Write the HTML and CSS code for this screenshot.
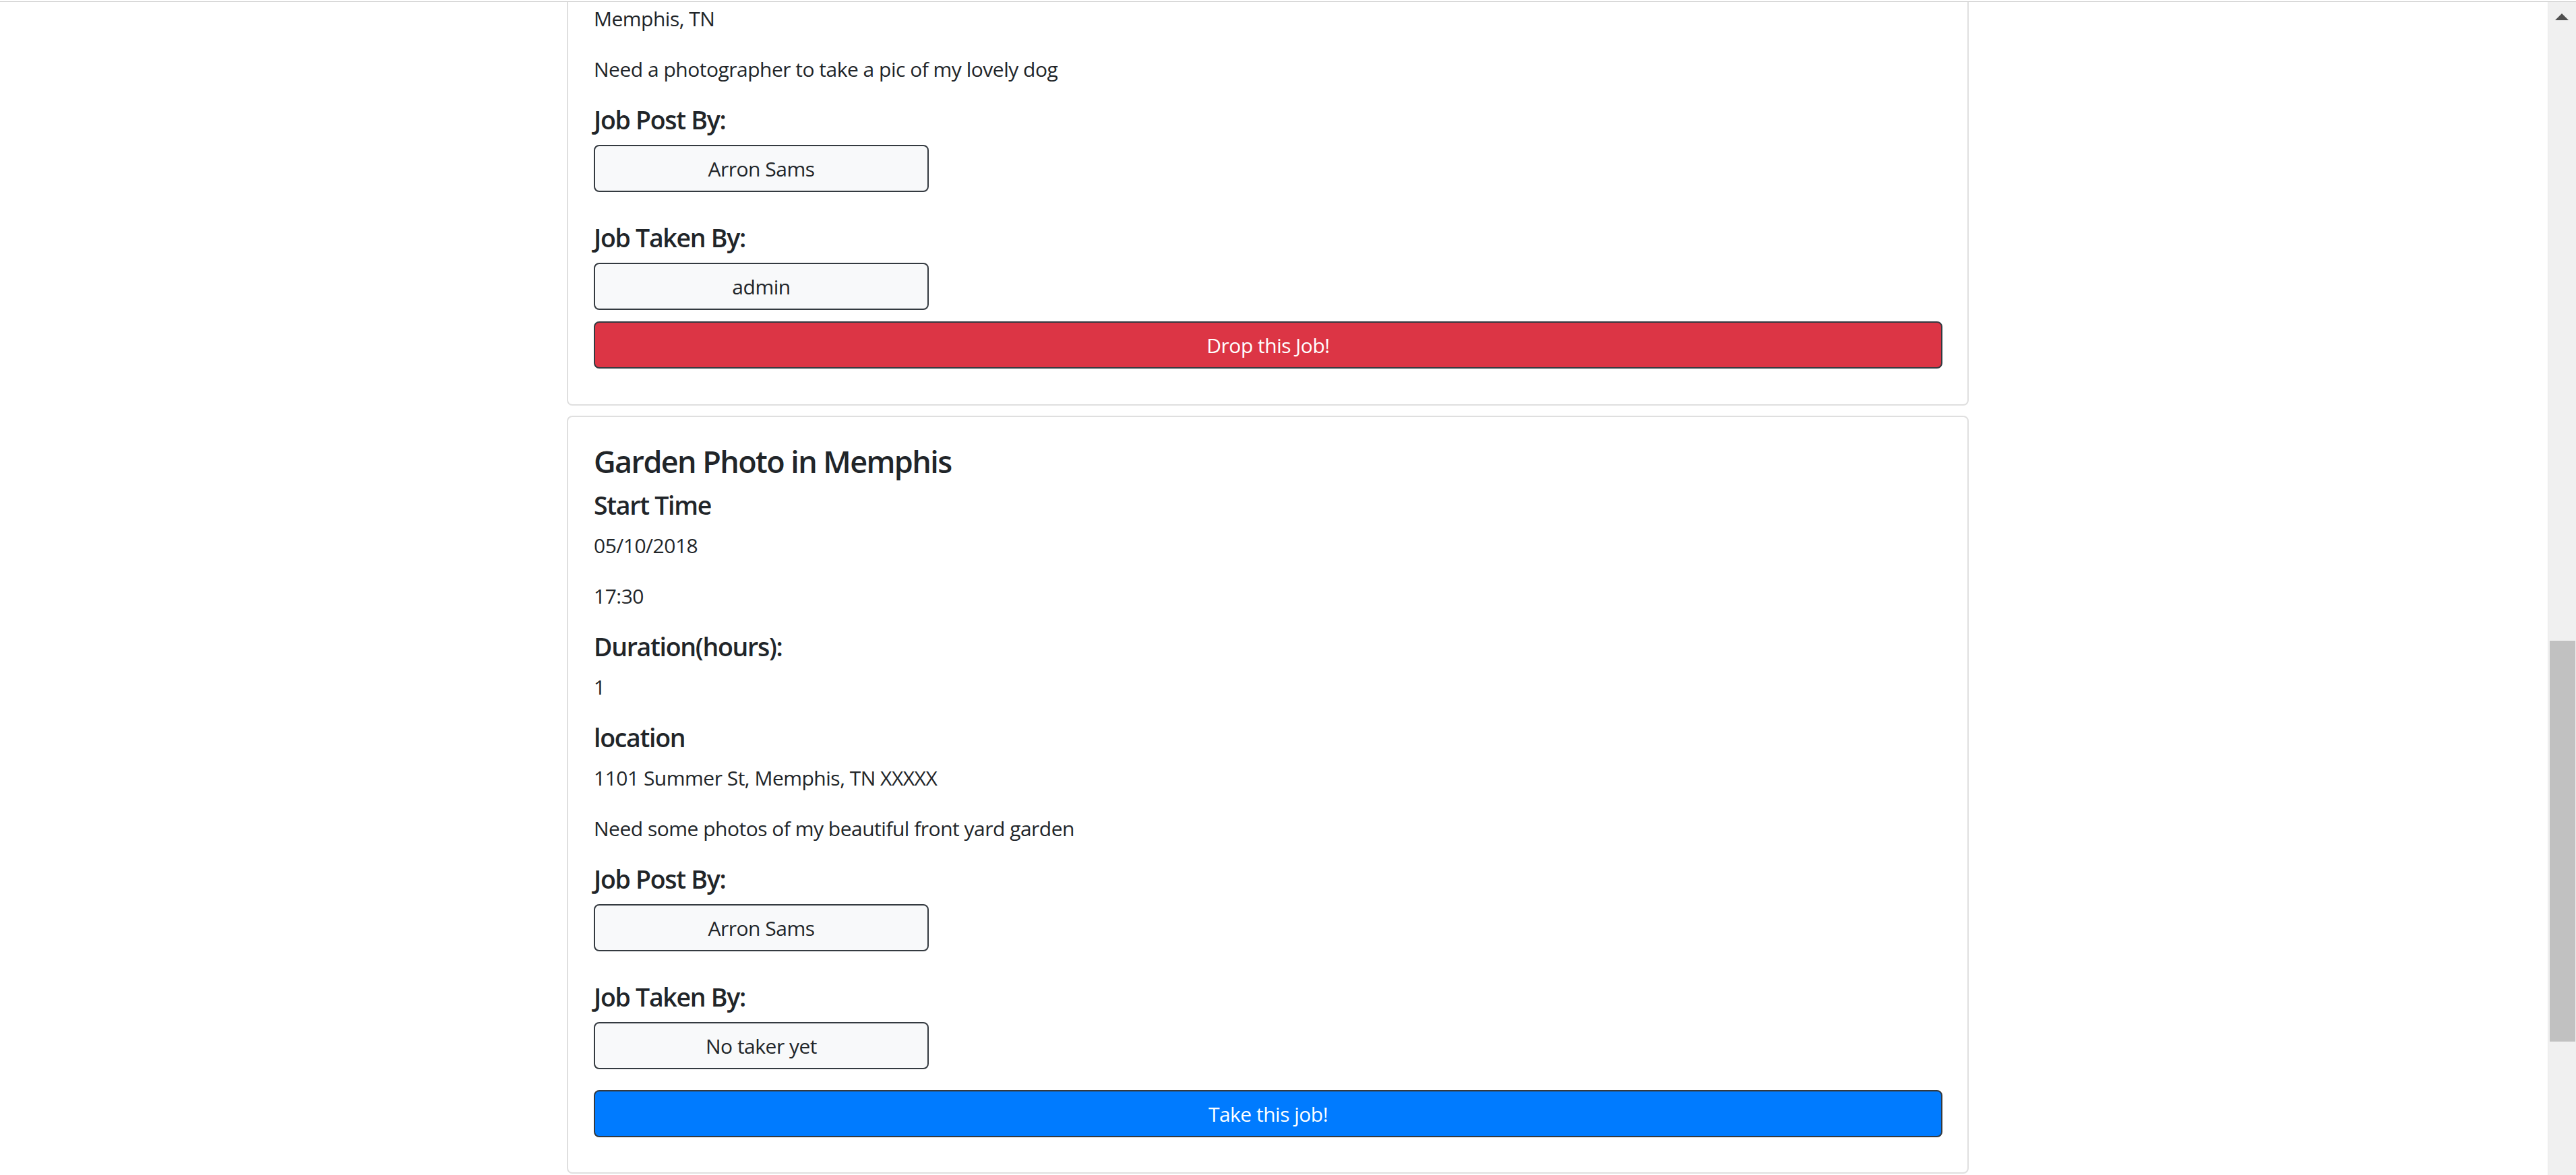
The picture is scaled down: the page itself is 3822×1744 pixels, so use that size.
FILE: index.html
```html
<!DOCTYPE html>
<html lang="en">
<head>
<meta charset="utf-8">
<title>Jobs</title>
<link rel="stylesheet" href="styles.css">
</head>
<body>
<div class="topline"></div>
<div class="page">
  <main class="container">
    <section class="card card-cut">
      <div class="card-body">
        <p>Memphis, TN</p>
        <p>Need a photographer to take a pic of my lovely dog</p>
        <h5>Job Post By:</h5>
        <div class="field field-gap">Arron Sams</div>
        <h5>Job Taken By:</h5>
        <div class="field field-tight">admin</div>
        <button class="btn btn-danger" type="button">Drop this Job!</button>
      </div>
    </section>
    <section class="card">
      <div class="card-body">
        <h4>Garden Photo in Memphis</h4>
        <h5>Start Time</h5>
        <p>05/10/2018</p>
        <p>17:30</p>
        <h5>Duration(hours):</h5>
        <p>1</p>
        <h5>location</h5>
        <p>1101 Summer St, Memphis, TN XXXXX</p>
        <p>Need some photos of my beautiful front yard garden</p>
        <h5>Job Post By:</h5>
        <div class="field field-gap">Arron Sams</div>
        <h5>Job Taken By:</h5>
        <div class="field field-loose">No taker yet</div>
        <button class="btn btn-primary" type="button">Take this job!</button>
      </div>
    </section>
  </main>
</div>
<div class="scrollbar">
  <div class="scroll-arrow"></div>
  <div class="scroll-thumb"></div>
</div>
</body>
</html>
```
FILE: styles.css
```css
html, body {
  margin: 0;
  padding: 0;
  background: #fff;
}
body {
  font-family: "Open Sans", "Noto Sans", "Liberation Sans", sans-serif;
  font-size: 30px;
  line-height: 45px;
  color: #212529;
  letter-spacing: -0.5px;
  overflow: hidden;
}
.topline {
  position: fixed;
  top: 0;
  left: 0;
  right: 0;
  height: 2px;
  background: #fff;
  border-bottom: 1px solid #cbcbcb;
  z-index: 5;
}
.page {
  display: flex;
  justify-content: center;
  padding-right: 60px;
}
.container {
  width: 2080px;
}
.card {
  border: 2px solid #dfdfdf;
  border-radius: 8px;
  background: #fff;
  margin-bottom: 15px;
}
.card-body {
  padding: 39px 37px 37px 38px;
}
.card-cut {
  border-top: none;
  border-top-left-radius: 0;
  border-top-right-radius: 0;
}
.card-cut .card-body {
  padding-top: 5px;
  padding-bottom: 38px;
}
p {
  margin: 0 0 30px;
}
h4, h5 {
  margin: 0 0 15px;
  font-weight: 600;
}
h4 {
  font-size: 45px;
  line-height: 54px;
  letter-spacing: -1.6px;
}
h5 {
  font-size: 37.5px;
  line-height: 45px;
  letter-spacing: -1.3px;
}
.field {
  box-sizing: border-box;
  width: 497px;
  height: 70px;
  background: #f8f9fa;
  border: 2px solid #343a40;
  border-radius: 8px;
  display: flex;
  align-items: center;
  justify-content: center;
}
.field-gap { margin-bottom: 45px; }
.field-tight { margin-bottom: 17px; }
.field-loose { margin-bottom: 31px; }
.btn {
  box-sizing: border-box;
  display: flex;
  align-items: center;
  justify-content: center;
  width: 100%;
  height: 70px;
  margin: 0 0 15px;
  padding: 0;
  border: 2px solid #343a40;
  border-radius: 8px;
  font: inherit;
  letter-spacing: inherit;
  color: #fff;
  cursor: pointer;
}
.btn-danger { background: #dc3545; }
.btn-primary { background: #007bff; }
.scrollbar {
  position: fixed;
  top: 3px;
  right: 0;
  bottom: 0;
  width: 42px;
  background: #f0f0f0;
  border-left: 1px solid #e9e9e9;
  box-sizing: border-box;
}
.scroll-arrow {
  position: absolute;
  top: 17px;
  left: 10px;
  width: 0;
  height: 0;
  border-left: 10px solid transparent;
  border-right: 10px solid transparent;
  border-bottom: 10px solid #505050;
}
.scroll-thumb {
  position: absolute;
  top: 948px;
  left: 2px;
  width: 38px;
  height: 595px;
  background: #c1c1c1;
}
```
